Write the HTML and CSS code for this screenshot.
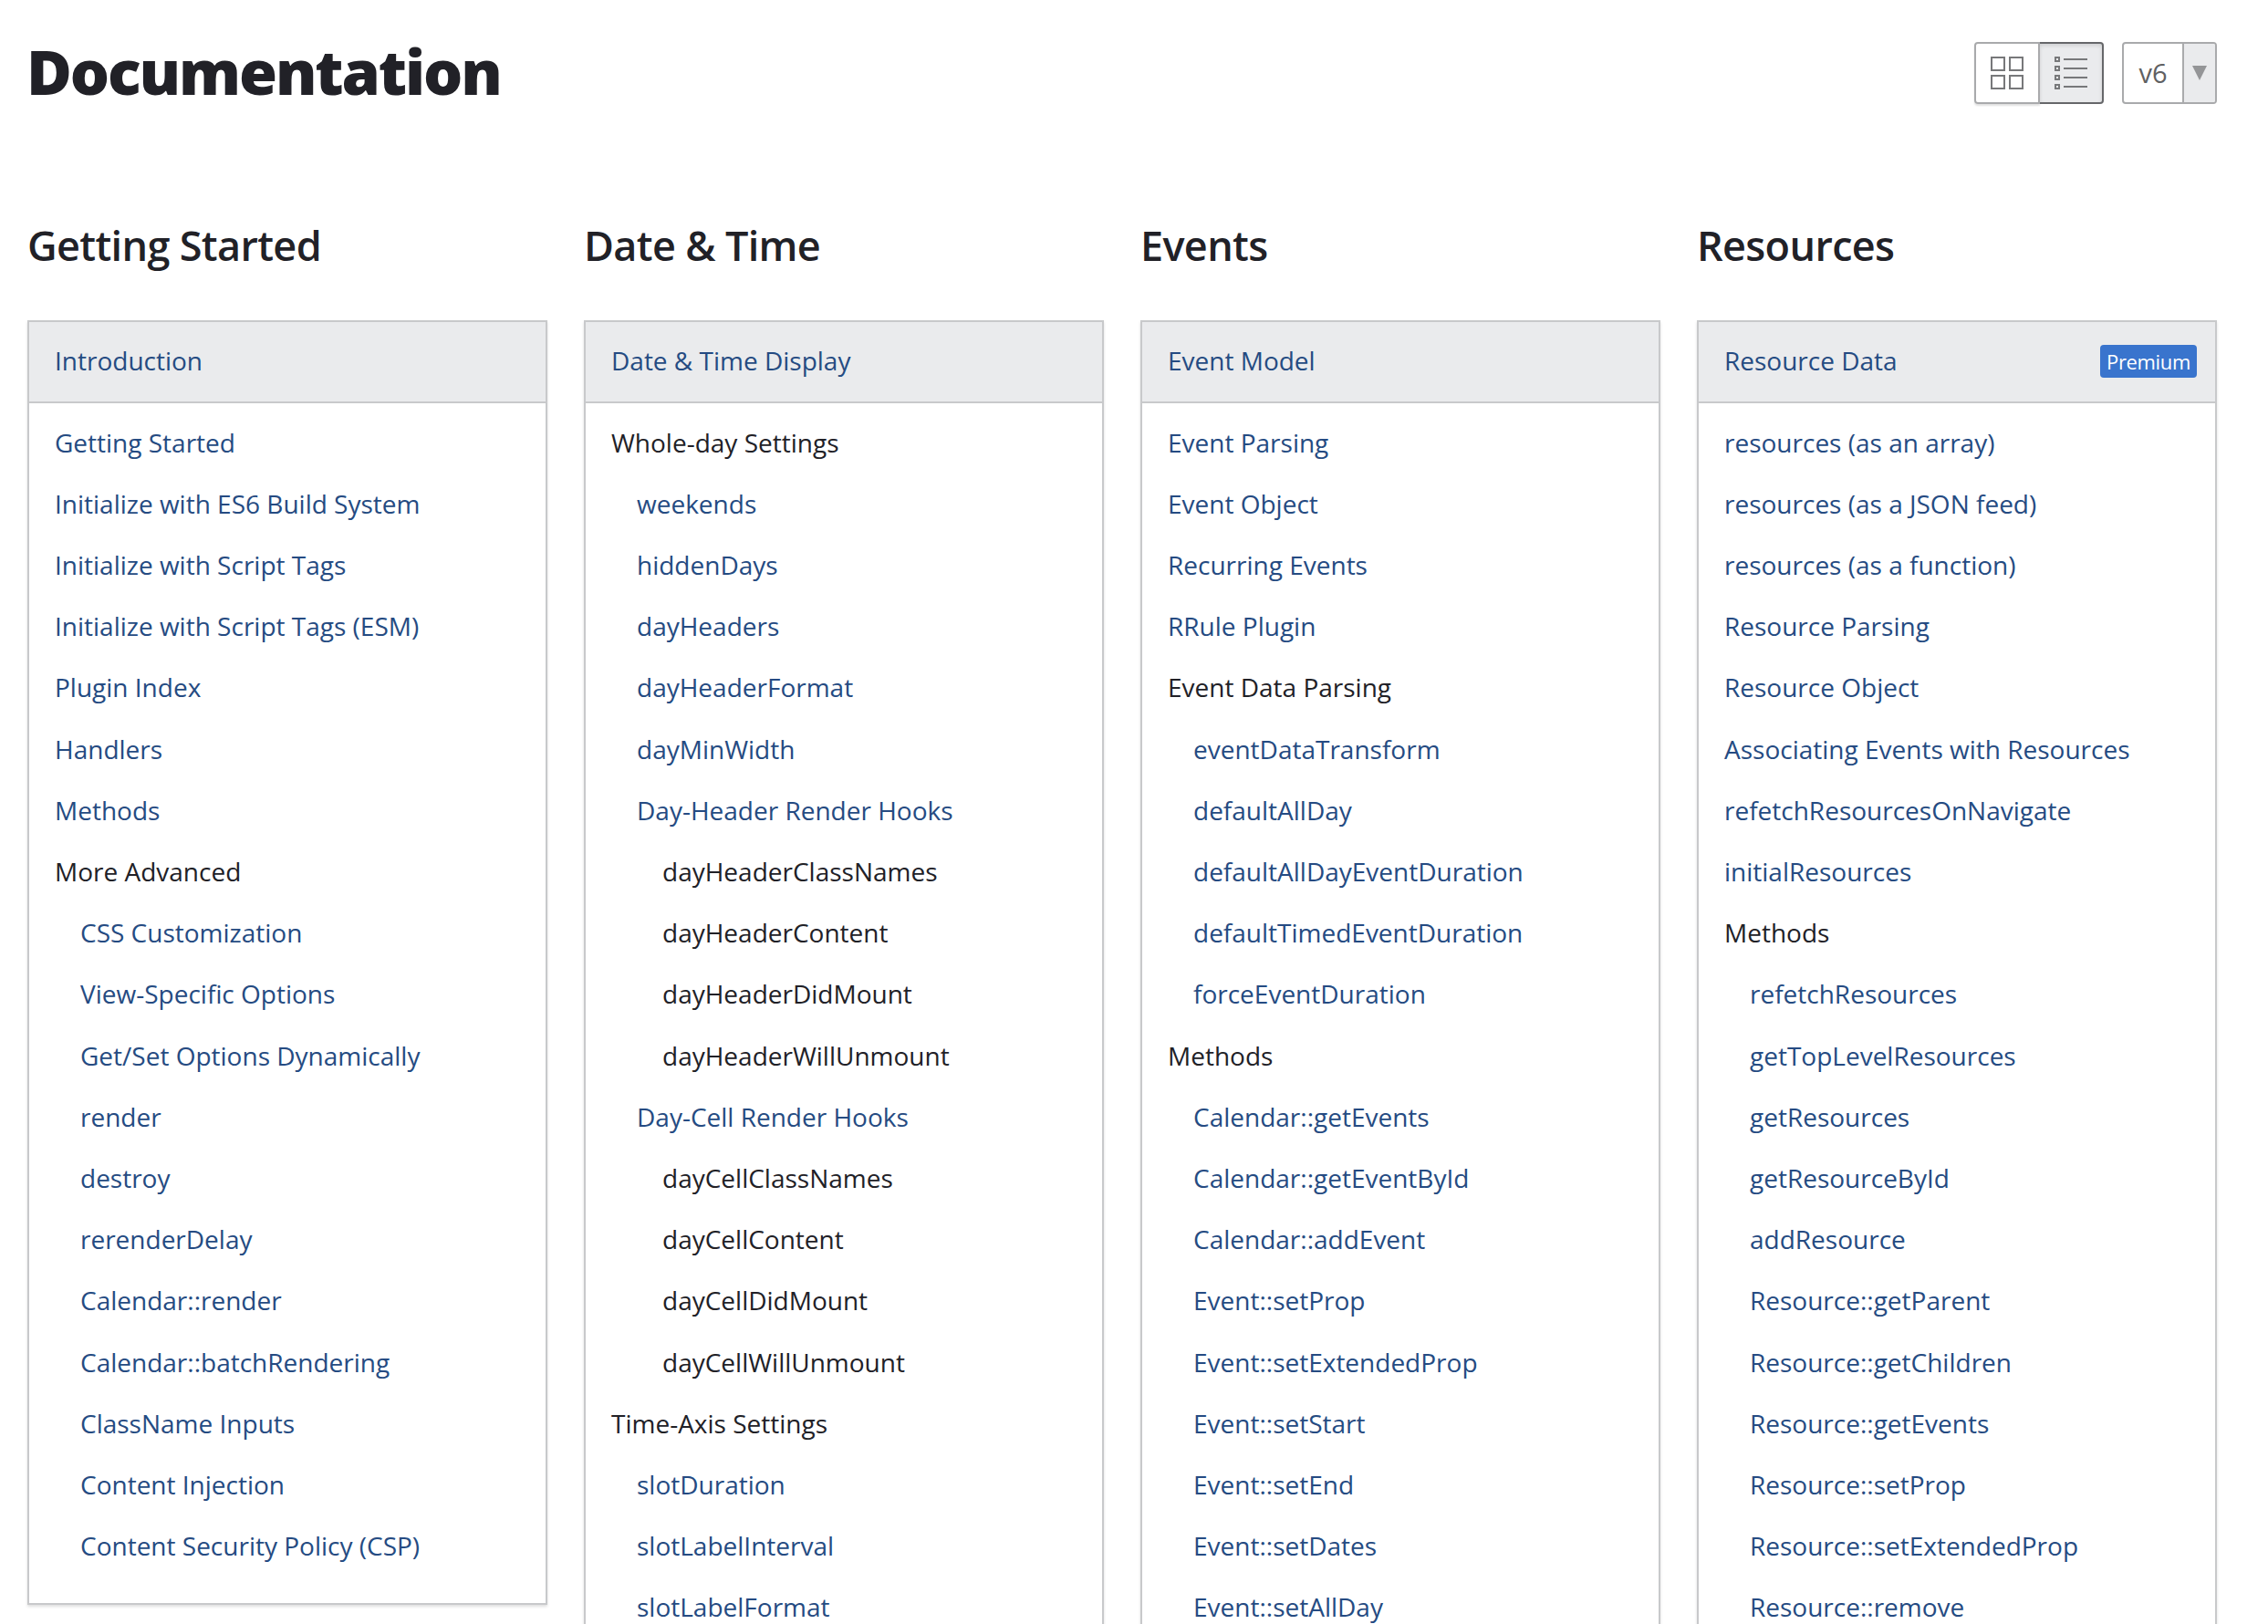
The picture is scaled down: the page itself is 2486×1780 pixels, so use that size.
FILE: index.html
```html
<!DOCTYPE html>
<html lang="en">
<head>
<meta charset="utf-8">
<title>Documentation</title>
<link rel="stylesheet" href="styles.css">
</head>
<body>
<header class="page-header">
  <h1 class="page-title">Documentation</h1>
  <div class="controls">
    <div class="view-toggle">
      <a class="view-button">
        <svg width="36" height="36" viewBox="0 0 36 36" fill="none" stroke="#77787a" stroke-width="2">
          <rect x="1" y="1" width="14" height="14"/><rect x="21" y="1" width="14" height="14"/>
          <rect x="1" y="21" width="14" height="14"/><rect x="21" y="21" width="14" height="14"/>
        </svg>
      </a>
      <a class="view-button view-button-active">
        <svg width="36" height="36" viewBox="0 0 36 36" fill="none" stroke="#77787a" stroke-width="2">
          <rect x="1" y="1" width="4" height="4"/><rect x="1" y="11" width="4" height="4"/>
          <rect x="1" y="21" width="4" height="4"/><rect x="1" y="31" width="4" height="4"/>
          <path d="M10 3h26M10 13h26M10 23h26M10 33h26"/>
        </svg>
      </a>
    </div>
    <div class="version-select">
      <span class="version-value">v6</span>
      <span class="version-arrow"><svg width="16" height="16" viewBox="0 0 16 16"><path d="M0 0h16L8 16z" fill="#949597"/></svg></span>
    </div>
  </div>
</header>
<main class="columns">
  <section class="column">
    <h2 class="column-title">Getting Started</h2>
    <div class="panel">
      <div class="panel-header"><a class="link">Introduction</a></div>
      <ul class="topics">
        <li><a class="link">Getting Started</a></li>
        <li><a class="link">Initialize with ES6 Build System</a></li>
        <li><a class="link">Initialize with Script Tags</a></li>
        <li><a class="link">Initialize with Script Tags (ESM)</a></li>
        <li><a class="link">Plugin Index</a></li>
        <li><a class="link">Handlers</a></li>
        <li><a class="link">Methods</a></li>
        <li>More Advanced
          <ul>
            <li><a class="link">CSS Customization</a></li>
            <li><a class="link">View-Specific Options</a></li>
            <li><a class="link">Get/Set Options Dynamically</a></li>
            <li><a class="link">render</a></li>
            <li><a class="link">destroy</a></li>
            <li><a class="link">rerenderDelay</a></li>
            <li><a class="link">Calendar::render</a></li>
            <li><a class="link">Calendar::batchRendering</a></li>
            <li><a class="link">ClassName Inputs</a></li>
            <li><a class="link">Content Injection</a></li>
            <li><a class="link">Content Security Policy (CSP)</a></li>
          </ul>
        </li>
      </ul>
    </div>
  </section>
  <section class="column">
    <h2 class="column-title">Date &amp; Time</h2>
    <div class="panel">
      <div class="panel-header"><a class="link">Date &amp; Time Display</a></div>
      <ul class="topics">
        <li>Whole-day Settings
          <ul>
            <li><a class="link">weekends</a></li>
            <li><a class="link">hiddenDays</a></li>
            <li><a class="link">dayHeaders</a></li>
            <li><a class="link">dayHeaderFormat</a></li>
            <li><a class="link">dayMinWidth</a></li>
            <li><a class="link">Day-Header Render Hooks</a>
              <ul>
                <li>dayHeaderClassNames</li>
                <li>dayHeaderContent</li>
                <li>dayHeaderDidMount</li>
                <li>dayHeaderWillUnmount</li>
              </ul>
            </li>
            <li><a class="link">Day-Cell Render Hooks</a>
              <ul>
                <li>dayCellClassNames</li>
                <li>dayCellContent</li>
                <li>dayCellDidMount</li>
                <li>dayCellWillUnmount</li>
              </ul>
            </li>
          </ul>
        </li>
        <li>Time-Axis Settings
          <ul>
            <li><a class="link">slotDuration</a></li>
            <li><a class="link">slotLabelInterval</a></li>
            <li><a class="link">slotLabelFormat</a></li>
          </ul>
        </li>
      </ul>
    </div>
  </section>
  <section class="column">
    <h2 class="column-title">Events</h2>
    <div class="panel">
      <div class="panel-header"><a class="link">Event Model</a></div>
      <ul class="topics">
        <li><a class="link">Event Parsing</a></li>
        <li><a class="link">Event Object</a></li>
        <li><a class="link">Recurring Events</a></li>
        <li><a class="link">RRule Plugin</a></li>
        <li>Event Data Parsing
          <ul>
            <li><a class="link">eventDataTransform</a></li>
            <li><a class="link">defaultAllDay</a></li>
            <li><a class="link">defaultAllDayEventDuration</a></li>
            <li><a class="link">defaultTimedEventDuration</a></li>
            <li><a class="link">forceEventDuration</a></li>
          </ul>
        </li>
        <li>Methods
          <ul>
            <li><a class="link">Calendar::getEvents</a></li>
            <li><a class="link">Calendar::getEventById</a></li>
            <li><a class="link">Calendar::addEvent</a></li>
            <li><a class="link">Event::setProp</a></li>
            <li><a class="link">Event::setExtendedProp</a></li>
            <li><a class="link">Event::setStart</a></li>
            <li><a class="link">Event::setEnd</a></li>
            <li><a class="link">Event::setDates</a></li>
            <li><a class="link">Event::setAllDay</a></li>
          </ul>
        </li>
      </ul>
    </div>
  </section>
  <section class="column">
    <h2 class="column-title">Resources</h2>
    <div class="panel">
      <div class="panel-header"><a class="link">Resource Data</a><span class="premium">Premium</span></div>
      <ul class="topics">
        <li><a class="link">resources (as an array)</a></li>
        <li><a class="link">resources (as a JSON feed)</a></li>
        <li><a class="link">resources (as a function)</a></li>
        <li><a class="link">Resource Parsing</a></li>
        <li><a class="link">Resource Object</a></li>
        <li><a class="link">Associating Events with Resources</a></li>
        <li><a class="link">refetchResourcesOnNavigate</a></li>
        <li><a class="link">initialResources</a></li>
        <li>Methods
          <ul>
            <li><a class="link">refetchResources</a></li>
            <li><a class="link">getTopLevelResources</a></li>
            <li><a class="link">getResources</a></li>
            <li><a class="link">getResourceById</a></li>
            <li><a class="link">addResource</a></li>
            <li><a class="link">Resource::getParent</a></li>
            <li><a class="link">Resource::getChildren</a></li>
            <li><a class="link">Resource::getEvents</a></li>
            <li><a class="link">Resource::setProp</a></li>
            <li><a class="link">Resource::setExtendedProp</a></li>
            <li><a class="link">Resource::remove</a></li>
          </ul>
        </li>
      </ul>
    </div>
  </section>
</main>
</body>
</html>
```
FILE: styles.css
```css
* { box-sizing: border-box; }

html { overflow: hidden; }

body {
  margin: 0;
  height: 1780px;
  overflow: hidden;
  background: #fff;
  color: #212127;
  font: 420 28px/67.2px "Open Sans", "Noto Sans", sans-serif;
  letter-spacing: 0;
}

h1, h2, ul { margin: 0; padding: 0; }
ul { list-style: none; }

.link { color: #254b82; }

.page-header {
  display: flex;
  justify-content: space-between;
  height: 223px;
  padding: 30px 56px 0 29px;
}

.page-title {
  font-size: 68px;
  font-weight: 800;
  line-height: 96px;
  letter-spacing: -2.1px;
}

.controls {
  display: flex;
  gap: 20px;
  padding-top: 16px;
}

.view-toggle { display: flex; }

.view-button {
  display: flex;
  align-items: center;
  justify-content: center;
  width: 72px;
  height: 68px;
  border: 2px solid #a9aaac;
  border-radius: 4px 0 0 4px;
  box-shadow: 0 2px 2px rgba(0, 0, 0, 0.12);
}

.view-button-active {
  width: 70px;
  background: #eaebed;
  border-color: #66676a;
  border-left: 0;
  border-radius: 0 4px 4px 0;
  box-shadow: inset 0 2px 4px rgba(0, 0, 0, 0.12);
}

.version-select {
  display: flex;
  width: 104px;
  height: 68px;
  border: 2px solid #a9aaac;
  border-radius: 4px;
  overflow: hidden;
}

.version-value {
  flex: 1;
  color: #5f6062;
  font-size: 29px;
  line-height: 63px;
  text-align: center;
}

.version-arrow {
  display: flex;
  align-items: center;
  justify-content: center;
  width: 36px;
  background: #eaebed;
  border-left: 2px solid #a9aaac;
}

.columns {
  display: grid;
  grid-template-columns: repeat(4, 570px);
  gap: 40px;
  align-items: start;
  padding-left: 30px;
}

.column-title {
  height: 128px;
  padding-top: 16px;
  font-size: 45px;
  font-weight: 550;
  line-height: 60px;
  letter-spacing: -0.65px;
}

.panel {
  border: 2px solid #c8c9cb;
  box-shadow: 0 2px 3px rgba(0, 0, 0, 0.13);
}

.panel-header {
  display: flex;
  align-items: center;
  justify-content: space-between;
  height: 89px;
  padding: 0 20px 1px 28px;
  background: #eaebed;
  border-bottom: 2px solid #c8c9cb;
}

.premium {
  width: 106px;
  height: 36px;
  border-radius: 4px;
  background: #3974cd;
  color: #fff;
  font-size: 22px;
  line-height: 36px;
  letter-spacing: -0.35px;
  text-align: center;
}

.topics { padding: 9.5px 28px 28.7px; }
.topics ul { padding-left: 28px; }
```
